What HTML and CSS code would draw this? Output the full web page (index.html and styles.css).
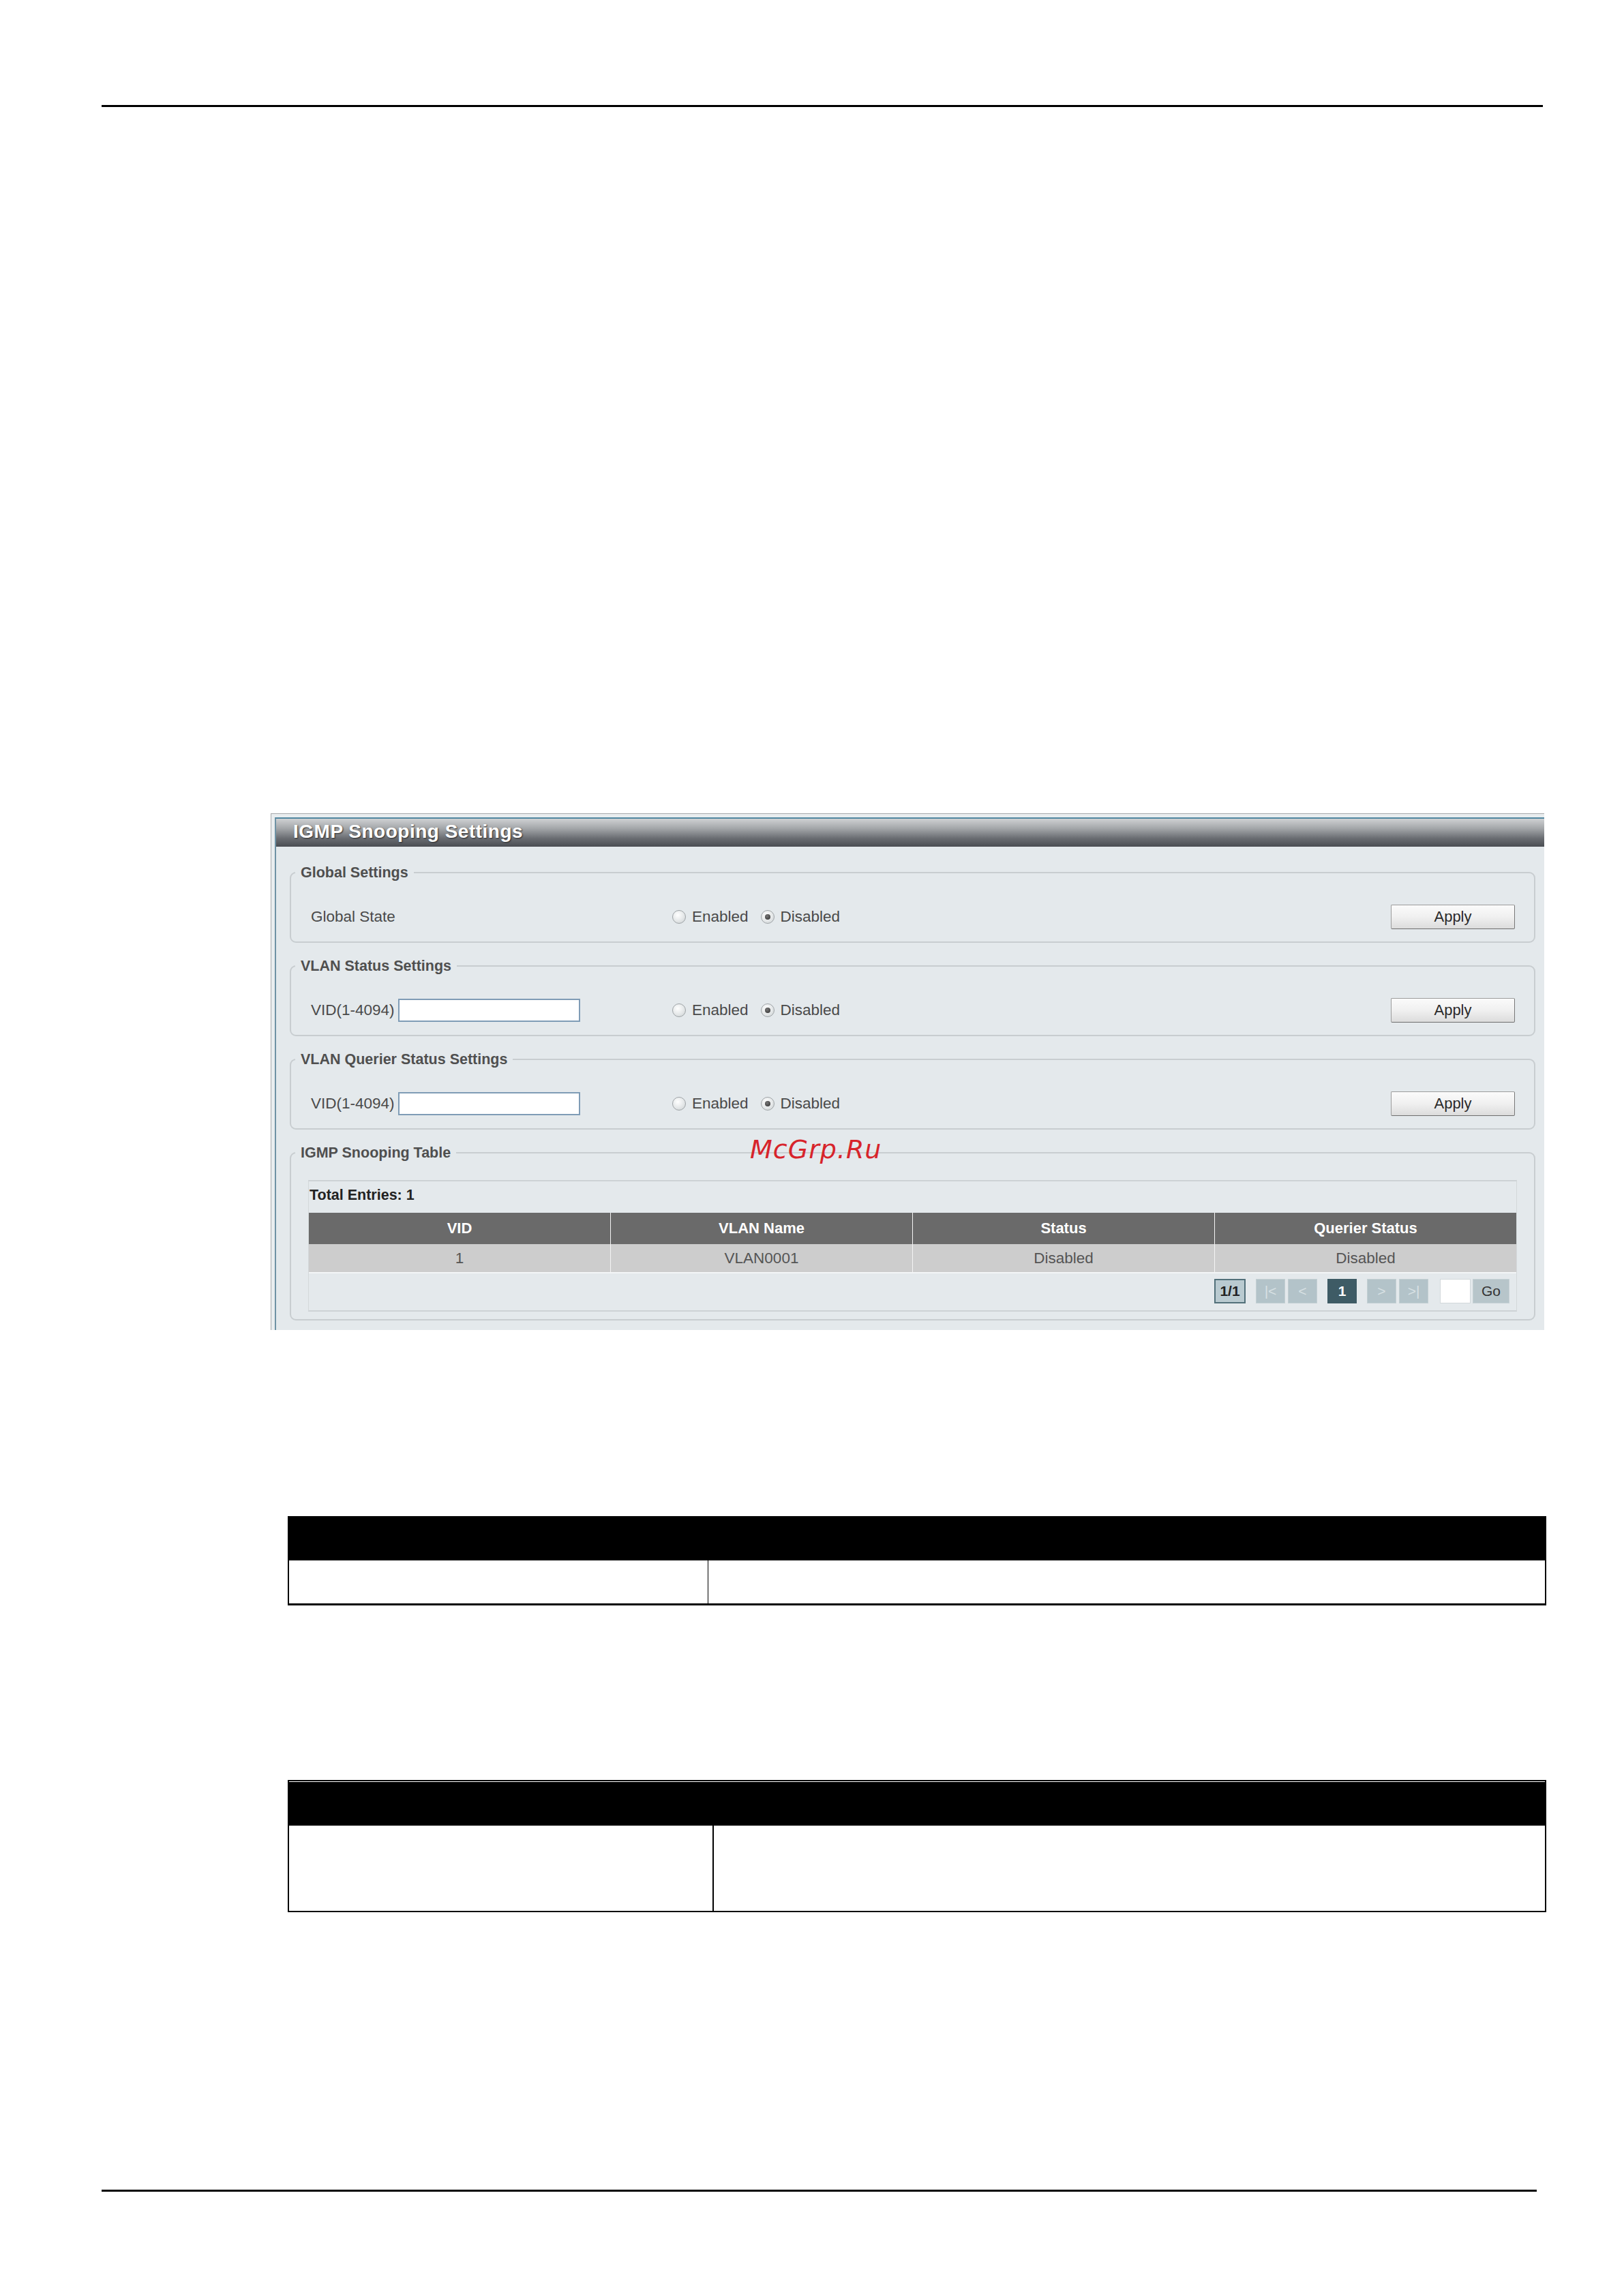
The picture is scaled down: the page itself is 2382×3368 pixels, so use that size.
FILE: index.html
```html
<!DOCTYPE html>
<html lang="en">
<head>
<meta charset="utf-8">
<title>IGMP Snooping Settings</title>
<link rel="stylesheet" href="styles.css">
</head>
<body>
<div class="page">
  <div class="rule rule-top"></div>

  <div class="panel">
    <div class="panel-inner">
      <div class="panel-title">IGMP Snooping Settings</div>
      <div class="panel-body">
        <fieldset class="group">
          <legend>Global Settings</legend>
          <div class="row">
            <div class="cell-label">Global State</div>
            <div class="radios">
              <span class="radio"></span><span class="rlabel">Enabled</span>
              <span class="radio checked"></span><span class="rlabel">Disabled</span>
            </div>
            <button class="apply" type="button">Apply</button>
          </div>
        </fieldset>

        <fieldset class="group">
          <legend>VLAN Status Settings</legend>
          <div class="row">
            <div class="cell-label">VID(1-4094)<span class="text-input"></span></div>
            <div class="radios">
              <span class="radio"></span><span class="rlabel">Enabled</span>
              <span class="radio checked"></span><span class="rlabel">Disabled</span>
            </div>
            <button class="apply" type="button">Apply</button>
          </div>
        </fieldset>

        <fieldset class="group">
          <legend>VLAN Querier Status Settings</legend>
          <div class="row">
            <div class="cell-label">VID(1-4094)<span class="text-input"></span></div>
            <div class="radios">
              <span class="radio"></span><span class="rlabel">Enabled</span>
              <span class="radio checked"></span><span class="rlabel">Disabled</span>
            </div>
            <button class="apply" type="button">Apply</button>
          </div>
        </fieldset>

        <fieldset class="group group-table">
          <legend>IGMP Snooping Table</legend>
          <div class="table-box">
            <div class="total">Total Entries: 1</div>
            <div class="grid">
              <div class="gh">VID</div>
              <div class="gh">VLAN Name</div>
              <div class="gh">Status</div>
              <div class="gh">Querier Status</div>
              <div class="gd">1</div>
              <div class="gd">VLAN0001</div>
              <div class="gd">Disabled</div>
              <div class="gd">Disabled</div>
            </div>
            <div class="pager">
              <span class="pg pg-count">1/1</span>
              <span class="pg pg-nav">|&lt;</span>
              <span class="pg pg-nav pg-pair">&lt;</span>
              <span class="pg pg-cur">1</span>
              <span class="pg pg-nav">&gt;</span>
              <span class="pg pg-nav pg-pair">&gt;|</span>
              <span class="pg pg-input"></span>
              <span class="pg pg-go">Go</span>
            </div>
          </div>
        </fieldset>
      </div>
    </div>
    <div class="watermark">McGrp.Ru</div>
  </div>

  <table class="spec spec-one">
    <thead><tr><th class="c1"></th><th class="c2"></th></tr></thead>
    <tbody><tr><td class="c1"></td><td class="c2"></td></tr></tbody>
  </table>

  <table class="spec spec-two">
    <thead><tr><th class="c1"></th><th class="c2"></th></tr></thead>
    <tbody><tr><td class="c1"></td><td class="c2"></td></tr></tbody>
  </table>

  <div class="rule rule-bottom"></div>
</div>
</body>
</html>
```

FILE: styles.css
```css
html, body {
  margin: 0;
  padding: 0;
  background: #ffffff;
}

body {
  font-family: "Liberation Sans", Arial, sans-serif;
  color: #444;
}

.page {
  width: 2382px;
  min-height: 3368px;
  padding-top: 154px;
  box-sizing: border-box;
}

.rule {
  height: 3px;
  background: #000;
}

.rule-top {
  margin-left: 149px;
  width: 2114px;
}

.rule-bottom {
  margin-top: 407px;
  margin-left: 149px;
  width: 2105px;
}

/* ---------- Screenshot panel ---------- */
.panel {
  position: relative;
  margin-top: 1036px;
  margin-left: 397px;
  width: 1868px;
  box-sizing: border-box;
  border-top: 1px solid #a6a9ab;
  border-left: 1px solid #a6a9ab;
  padding: 5px 0 0 5px;
  background: #e9edef;
}

.panel-inner {
  border-top: 2px solid #4f86a0;
  border-left: 2px solid #6f93a5;
  background: #e4e9ec;
}

.panel-title {
  height: 41px;
  line-height: 38px;
  padding-left: 25px;
  background: linear-gradient(#cfd1d3 0%, #a3a6a9 35%, #6a6d72 70%, #4a4d52 100%);
  color: #ffffff;
  font-size: 28px;
  font-weight: bold;
  letter-spacing: 0.5px;
  text-shadow: 1px 1px 2px #2a2a2a;
}

.panel-body {
  padding: 26px 0 14px 0;
}

.group {
  margin: 0 13px 22px 20px;
  padding: 0 28px 18px 6px;
  border: 2px solid #c8cdd0;
  border-radius: 9px;
  min-width: 0;
}

.group:last-child {
  margin-bottom: 0;
}

.group legend {
  padding: 0 8px;
  font-size: 21.5px;
  line-height: 24px;
  font-weight: bold;
  color: #4f4f4f;
}

.row {
  display: flex;
  align-items: center;
  margin-top: 35px;
  padding-left: 23px;
  height: 36px;
  font-size: 22.5px;
  color: #4a4a4a;
}

.cell-label {
  width: 530px;
  display: flex;
  align-items: center;
}

.text-input {
  display: inline-block;
  margin-left: 5px;
  width: 267px;
  height: 34px;
  box-sizing: border-box;
  background: #ffffff;
  border: 2px solid #7f9cb6;
}

.radios {
  display: flex;
  align-items: center;
}

.radio {
  width: 20px;
  height: 20px;
  box-sizing: border-box;
  border-radius: 50%;
  border: 1px solid #9ea3a6;
  background: radial-gradient(circle at 40% 35%, #ffffff 0%, #e4e7e8 55%, #c9ced0 100%);
  display: flex;
  align-items: center;
  justify-content: center;
}

.radio.checked::after {
  content: "";
  width: 8px;
  height: 8px;
  border-radius: 50%;
  background: radial-gradient(circle at 40% 35%, #777 0%, #2e2e2e 100%);
}

.rlabel {
  margin-left: 9px;
  margin-right: 18px;
}

.rlabel:last-child {
  margin-right: 0;
}

.apply {
  margin-left: auto;
  width: 182px;
  height: 36px;
  box-sizing: border-box;
  padding: 0;
  font-family: "Liberation Sans", Arial, sans-serif;
  font-size: 22px;
  color: #2a2a2a;
  background: linear-gradient(#fbfbfb 0%, #f0f0f0 50%, #dcdcdc 100%);
  border: 1px solid #9c9c9c;
  border-right-color: #777;
  border-bottom-color: #6e6e6e;
  border-radius: 2px;
}

/* ---------- table fieldset ---------- */
.group-table {
  padding-right: 25px;
  padding-bottom: 11px;
}

.table-box {
  margin-top: 28px;
  margin-left: 19px;
  border-top: 2px solid #cdd2d5;
  border-bottom: 2px solid #cdd2d5;
  border-left: 1px solid #d3d8da;
  border-right: 1px solid #d3d8da;
}

.total {
  padding: 8px 0 14px 1px;
  line-height: 24px;
  font-size: 21.5px;
  font-weight: bold;
  color: #222;
}

.grid {
  display: grid;
  grid-template-columns: repeat(4, 1fr);
  column-gap: 1px;
  background: #f4f4f4;
  border-bottom: 2px solid #f4f6f7;
}

.gh {
  height: 46px;
  display: flex;
  align-items: center;
  justify-content: center;
  background: #6a6a6a;
  color: #ffffff;
  font-size: 22px;
  font-weight: bold;
}

.gd {
  height: 41px;
  display: flex;
  align-items: center;
  justify-content: center;
  background: #cdcdcd;
  color: #555;
  font-size: 22.5px;
}

.pager {
  display: flex;
  justify-content: flex-end;
  align-items: center;
  padding: 8px 10px 10px 0;
}

.pg {
  height: 36px;
  width: 43px;
  box-sizing: border-box;
  display: flex;
  align-items: center;
  justify-content: center;
  font-size: 21px;
}

.pg-count {
  width: 46px;
  background: #b9cad0;
  border: 2px solid #52707a;
  color: #222;
  font-weight: bold;
  margin-right: 15px;
}

.pg-nav {
  background: #b3c3c9;
  border: 1px solid #c3cfd3;
  color: #d8e1e4;
}

.pg-pair {
  margin-left: 4px;
}

.pg-cur {
  background: #3e5b65;
  color: #ffffff;
  font-weight: bold;
  margin: 0 15px;
}

.pg-input {
  width: 45px;
  background: #ffffff;
  border: 1px solid #d2d8db;
  margin-left: 17px;
}

.pg-go {
  width: 54px;
  background: #b7c5ca;
  border: 1px solid #c6d1d5;
  margin-left: 3px;
  color: #333;
}

.watermark {
  position: absolute;
  left: 702px;
  top: 473px;
  font-family: "DejaVu Sans", sans-serif;
  font-style: oblique;
  font-size: 38px;
  line-height: 38px;
  letter-spacing: 1px;
  color: #d7242b;
}

/* ---------- empty spec tables ---------- */
.spec {
  margin-left: 422px;
  width: 1846px;
  border-spacing: 0;
  border-left: 2px solid #000;
  border-right: 2px solid #000;
  border-bottom: 3px solid #000;
}

.spec th {
  padding: 0;
  background: #000;
}

.spec td {
  padding: 0;
  background: #fff;
}

.spec-one {
  margin-top: 273px;
}

.spec-one th {
  height: 65px;
}

.spec-one td {
  height: 63px;
}

.spec-one .c1 {
  width: 614px;
}

.spec-one td.c1 {
  border-right: 1px solid #000;
}

.spec-two {
  margin-top: 256px;
  border-top: 2px solid #000;
  border-bottom-width: 2px;
}

.spec-two th {
  height: 64px;
  border-top: 1px solid #fff;
}

.spec-two .c1 {
  width: 621px;
}

.spec-two td {
  height: 125px;
}

.spec-two td.c1 {
  border-right: 2px solid #000;
}
```
